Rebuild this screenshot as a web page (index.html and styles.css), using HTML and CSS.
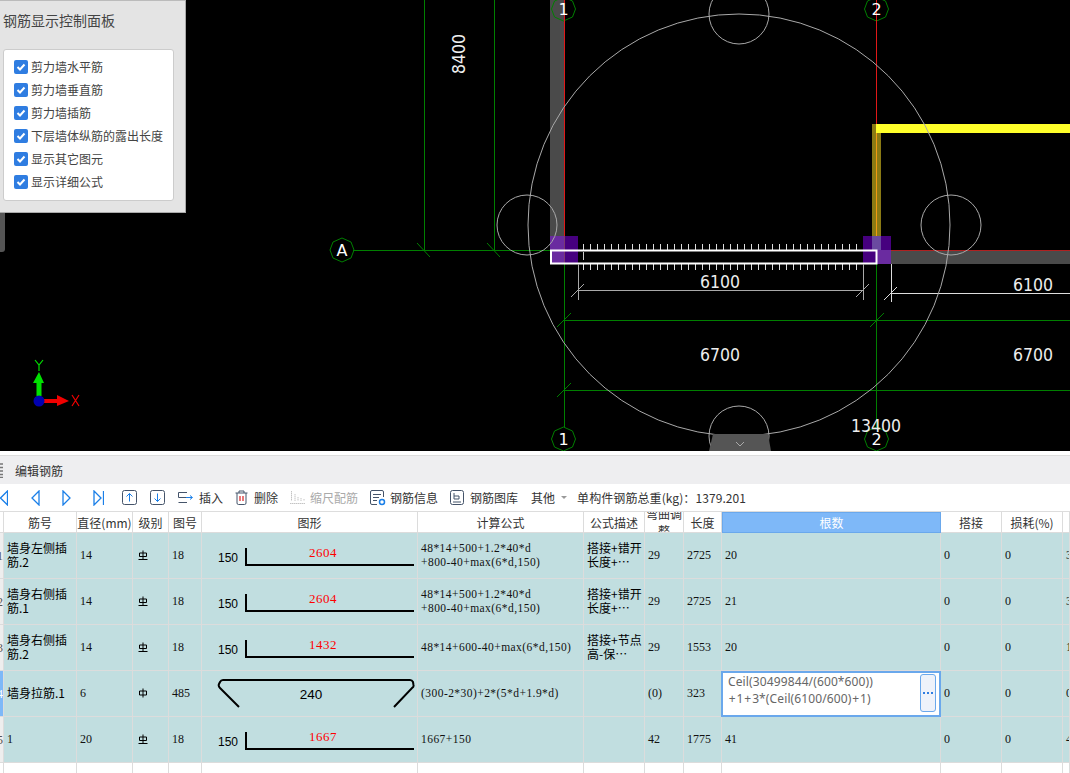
FILE: index.html
```html
<!DOCTYPE html>
<html lang="zh">
<head>
<meta charset="utf-8">
<title>编辑钢筋</title>
<link rel="stylesheet" href="styles.css">
</head>
<body>
<svg class="defs" width="0" height="0">
  <symbol id="g3" viewBox="0 0 10 10"><path d="M5 .5V9.500M1.500 3H8.500V6.500H1.500ZM.5 9.500H9.500" fill="none" stroke="#000" stroke-width="1"/></symbol>
  <symbol id="g1" viewBox="0 0 10 10"><path d="M5 .5V9.500M1.500 3H8.500V7H1.500Z" fill="none" stroke="#000" stroke-width="1"/></symbol>
</svg>
<section class="viewport">
  <svg class="cad" width="1070" height="451" viewBox="0 0 1070 451">
    <rect width="1070" height="451" fill="#000"/>
    <rect x="550" y="0" width="14" height="250" fill="#4a4a4a"/>
    <rect x="891" y="250" width="179" height="14" fill="#4a4a4a"/>
    <rect x="872" y="124" width="9" height="126" fill="#8a7a14"/>
    <rect x="876" y="124" width="194" height="9" fill="#ffff2a"/>
    <rect x="876" y="133" width="1" height="117" fill="#f39a10"/>
    <g stroke="#007f00" fill="none">
      <path d="M424.500 0V250M494.500 0V250M353 250.500H550M564.500 264V427M876.500 264V427M564 320.500H1070M564 390.500H1070"/>
      <path d="M417 243L430 257M487 243L500 257M557 327L571 313M870 327L884 313M557 397L571 383"/>
      <polygon points="354,250 351,258 342,262 333,258 330,250 333,242 342,238 351,242"/>
      <polygon points="575.500,9 572.500,17 563.500,21 554.500,17 551.500,9 554.500,1 563.500,-3 572.500,1"/>
      <polygon points="888.500,9 885.500,17 876.500,21 867.500,17 864.500,9 867.500,1 876.500,-3 885.500,1"/>
      <polygon points="575.500,439 572.500,447 563.500,451 554.500,447 551.500,439 554.500,431 563.500,427 572.500,431"/>
      <polygon points="888.500,439 885.500,447 876.500,451 867.500,447 864.500,439 867.500,431 876.500,427 885.500,431"/>
    </g>
    <path d="M564.500 0V250M876.500 0V124" stroke="#e01818" fill="none"/>
    <path d="M891 250.500H1070" stroke="#b02020"/>
    <rect x="550" y="236" width="28" height="28" fill="#46007f"/>
    <rect x="550" y="236" width="14" height="28" fill="#6a2ba0"/>
    <rect x="863" y="236" width="28" height="28" fill="#46007f"/>
    <rect x="877" y="250" width="14" height="14" fill="#6a2ba0"/>
    <rect x="872" y="236" width="9" height="14" fill="#6a4aa0"/>
    <path d="M564.500 236V264" stroke="#7a3a70"/>
    <g fill="none">
      <path d="M583 247H857M583 267H857" stroke="#ddd" stroke-width="6" stroke-dasharray="1 6"/>
      <path d="M583.500 252V260" stroke="#ccc"/>
      <rect x="551" y="250.500" width="325.500" height="13" stroke="#fff" stroke-width="2"/>
      <path d="M578.500 264V300M863.500 264V300M578 290.500H863M571 297L584 284M856 297L869 284" stroke="#a9a9a9"/>
      <path d="M891.500 264V302M891 293.500H1070M884 300L897 287" stroke="#ddd"/>
      <g stroke="#a9a9a9">
        <circle cx="739" cy="225" r="211"/>
        <circle cx="527" cy="225" r="30"/>
        <circle cx="951" cy="225" r="30"/>
        <circle cx="739" cy="14" r="30"/>
        <circle cx="739" cy="436" r="30"/>
      </g>
    </g>
    <path class="tab" d="M713 434H768L771 451H709Z" fill="#555"/>
    <path d="M736 442L740 446L744 442" stroke="#aaa" fill="none"/>
    <g class="dim">
      <text x="720" y="288">6100</text>
      <text x="1033" y="291">6100</text>
      <text x="720" y="361">6700</text>
      <text x="1033" y="361">6700</text>
      <text x="876" y="432">13400</text>
      <text transform="translate(465 54) rotate(-90)" x="0" y="0">8400</text>
    </g>
    <g class="axis-no">
      <text x="342" y="256">A</text>
      <text x="563.500" y="15" fill="#f0c0c0">1</text>
      <text x="876.500" y="15">2</text>
      <text x="563.500" y="445">1</text>
      <text x="876.500" y="445">2</text>
    </g>
    <path d="M36.500 396V383H33L39 372L44 383H41.500V396Z" fill="#00e000"/>
    <path d="M44 399H57V395L69 401L57 406V403H44Z" fill="#f00000"/>
    <circle cx="39" cy="401" r="5.500" fill="#0000b0"/>
    <path d="M35 360L39 365L43 360M39 365V371" stroke="#00e000" fill="none" stroke-width="1.200"/>
    <path d="M72 395L79 406M79 395L72 406" stroke="#f00000" fill="none" stroke-width="1.200"/>
  </svg>
  <div class="side-tab"></div>
  <aside class="panel">
    <h2 class="panel-title">钢筋显示控制面板</h2>
    <div class="panel-box">
      <label class="opt"><span class="chk"><svg width="14" height="14" viewBox="0 0 14 14"><path d="M3.500 7L6 9.500L10.500 4.500" fill="none" stroke="#fff" stroke-width="2"/></svg></span>剪力墙水平筋</label>
      <label class="opt"><span class="chk"><svg width="14" height="14" viewBox="0 0 14 14"><path d="M3.500 7L6 9.500L10.500 4.500" fill="none" stroke="#fff" stroke-width="2"/></svg></span>剪力墙垂直筋</label>
      <label class="opt"><span class="chk"><svg width="14" height="14" viewBox="0 0 14 14"><path d="M3.500 7L6 9.500L10.500 4.500" fill="none" stroke="#fff" stroke-width="2"/></svg></span>剪力墙插筋</label>
      <label class="opt"><span class="chk"><svg width="14" height="14" viewBox="0 0 14 14"><path d="M3.500 7L6 9.500L10.500 4.500" fill="none" stroke="#fff" stroke-width="2"/></svg></span>下层墙体纵筋的露出长度</label>
      <label class="opt"><span class="chk"><svg width="14" height="14" viewBox="0 0 14 14"><path d="M3.500 7L6 9.500L10.500 4.500" fill="none" stroke="#fff" stroke-width="2"/></svg></span>显示其它图元</label>
      <label class="opt"><span class="chk"><svg width="14" height="14" viewBox="0 0 14 14"><path d="M3.500 7L6 9.500L10.500 4.500" fill="none" stroke="#fff" stroke-width="2"/></svg></span>显示详细公式</label>
    </div>
  </aside>
</section>

<section class="editor-pane">
  <header class="pane-title">
    <svg class="grip" width="3" height="15" viewBox="0 0 3 15"><path d="M0 1H3M0 4.500H3M0 8H3M0 11.500H3M0 14.500H3" stroke="#777" stroke-width="1.500"/></svg>
    <span>编辑钢筋</span>
  </header>
  <div class="toolbar">
    <svg class="nav n0" width="8" height="16" viewBox="0 0 8 16"><path d="M7.500 1L.5 8L7.500 15Z" fill="none" stroke="#1a7fe8" stroke-width="1.300"/></svg>
    <svg class="nav n1" width="9" height="16" viewBox="0 0 9 16"><path d="M8 1L1 8L8 15Z" fill="none" stroke="#1a7fe8" stroke-width="1.300"/></svg>
    <svg class="nav n2" width="9" height="16" viewBox="0 0 9 16"><path d="M1 1L8 8L1 15Z" fill="none" stroke="#1a7fe8" stroke-width="1.300"/></svg>
    <svg class="nav n3" width="11" height="16" viewBox="0 0 11 16"><path d="M1 1L8 8L1 15ZM10.500 1V15" fill="none" stroke="#1a7fe8" stroke-width="1.300"/></svg>
    <svg class="nav n4" width="15" height="15" viewBox="0 0 15 15"><rect x=".5" y=".5" width="14" height="14" rx="2" fill="none" stroke="#45546a"/><path d="M7.500 11.500V3.500M4.500 6.500L7.500 3.500L10.500 6.500" fill="none" stroke="#1a7fe8"/></svg>
    <svg class="nav n5" width="15" height="15" viewBox="0 0 15 15"><rect x=".5" y=".5" width="14" height="14" rx="2" fill="none" stroke="#45546a"/><path d="M7.500 3.500V11.500M4.500 8.500L7.500 11.500L10.500 8.500" fill="none" stroke="#1a7fe8"/></svg>
    <button class="tool t-ins"><svg width="15" height="12" viewBox="0 0 15 12"><path d="M9 .5H.5V5.500H9M.5 10.500H9" fill="none" stroke="#45546a"/><path d="M8 5.500H14M12 3.500L14.500 5.500L12 7.500" fill="none" stroke="#1a7fe8"/></svg>插入</button>
    <button class="tool t-del"><svg width="13" height="15" viewBox="0 0 13 15"><path d="M.5 3H12.500M4 3V1H9V3M2 3V13Q2 14.500 3.500 14.500H9.500Q11 14.500 11 13V3" fill="none" stroke="#45546a"/><path d="M5 6V11M8 6V11" stroke="#d92020" stroke-width="1.200"/></svg>删除</button>
    <button class="tool t-off"><svg width="15" height="15" viewBox="0 0 15 15"><path d="M1.500 1V11M5 4V11M8 7V11M11 8V11M14 9V11M0 13.500H15" fill="none" stroke="#c4c4c4" stroke-dasharray="1.500 .5"/></svg>缩尺配筋</button>
    <button class="tool t-inf"><svg width="16" height="16" viewBox="0 0 16 16"><path d="M7 14.500H2Q.5 14.500 .5 13V2Q.5 .5 2 .5H12Q13.500 .5 13.500 2V7M3 4.500H11M3 7.500H9M3 10.500H7" fill="none" stroke="#45546a"/><circle cx="12" cy="12" r="2.500" fill="none" stroke="#1a7fe8" stroke-width="1.500"/></svg>钢筋信息</button>
    <button class="tool t-lib"><svg width="14" height="15" viewBox="0 0 14 15"><rect x=".5" y=".5" width="13" height="14" rx="2" fill="none" stroke="#45546a"/><path d="M4 3V9H9V6H4M3 12H11" fill="none" stroke="#45546a"/></svg>钢筋图库</button>
    <button class="tool t-more">其他<span class="caret"></span></button>
    <span class="total">单构件钢筋总重(kg)：1379.201</span>
  </div>

  <div class="grid">
    <div class="row head">
      <div class="c"></div><div class="c">筋号</div><div class="c">直径(mm)</div><div class="c">级别</div><div class="c">图号</div><div class="c">图形</div><div class="c">计算公式</div><div class="c">公式描述</div><div class="c wrap">弯曲调整</div><div class="c">长度</div><div class="c on">根数</div><div class="c">搭接</div><div class="c">损耗(%)</div><div class="c"></div>
    </div>

    <div class="row data">
      <div class="c no">1</div><div class="c cn">墙身左侧插<br>筋.2</div><div class="c">14</div><div class="c sym"><svg width="10" height="10"><use href="#g3"/></svg></div><div class="c">18</div>
      <div class="c pic"><svg width="215" height="45" viewBox="0 0 215 45"><text class="s150" x="16" y="29">150</text><path d="M44 15V32H212" fill="none" stroke="#000" stroke-width="2"/><text class="len" x="121" y="24">2604</text></svg></div>
      <div class="c fx">48*14+500+1.2*40*d<br>+800-40+max(6*d,150)</div><div class="c cn">搭接+错开<br>长度+…</div><div class="c">29</div><div class="c">2725</div><div class="c">20</div><div class="c">0</div><div class="c">0</div><div class="c">3</div>
    </div>

    <div class="row data">
      <div class="c no">2</div><div class="c cn">墙身右侧插<br>筋.1</div><div class="c">14</div><div class="c sym"><svg width="10" height="10"><use href="#g3"/></svg></div><div class="c">18</div>
      <div class="c pic"><svg width="215" height="45" viewBox="0 0 215 45"><text class="s150" x="16" y="29">150</text><path d="M44 15V32H212" fill="none" stroke="#000" stroke-width="2"/><text class="len" x="121" y="24">2604</text></svg></div>
      <div class="c fx">48*14+500+1.2*40*d<br>+800-40+max(6*d,150)</div><div class="c cn">搭接+错开<br>长度+…</div><div class="c">29</div><div class="c">2725</div><div class="c">21</div><div class="c">0</div><div class="c">0</div><div class="c">3</div>
    </div>

    <div class="row data">
      <div class="c no">3</div><div class="c cn">墙身右侧插<br>筋.2</div><div class="c">14</div><div class="c sym"><svg width="10" height="10"><use href="#g3"/></svg></div><div class="c">18</div>
      <div class="c pic"><svg width="215" height="45" viewBox="0 0 215 45"><text class="s150" x="16" y="29">150</text><path d="M44 15V32H212" fill="none" stroke="#000" stroke-width="2"/><text class="len" x="121" y="24">1432</text></svg></div>
      <div class="c fx">48*14+600-40+max(6*d,150)</div><div class="c cn">搭接+节点<br>高-保…</div><div class="c">29</div><div class="c">1553</div><div class="c">20</div><div class="c">0</div><div class="c">0</div><div class="c">1</div>
    </div>

    <div class="row data">
      <div class="c no sel">4</div><div class="c cn">墙身拉筋.1</div><div class="c">6</div><div class="c sym"><svg width="10" height="10"><use href="#g1"/></svg></div><div class="c">485</div>
      <div class="c pic"><svg width="215" height="45" viewBox="0 0 215 45"><path d="M37 36L18 17Q16 15 17 13L18 11Q19 9 21 9H208Q210 9 211 11L211.500 14Q212 16 210 17L192 36" fill="none" stroke="#000" stroke-width="2"/><text class="s240" x="109" y="28">240</text></svg></div>
      <div class="c fx">(300-2*30)+2*(5*d+1.9*d)</div><div class="c"></div><div class="c">(0)</div><div class="c">323</div>
      <div class="c edit">
        <div class="edit-text">Ceil(30499844/(600*600))<br><span class="plus">+</span>1<span class="plus">+</span>3*(Ceil(6100/600)<span class="plus">+</span>1)</div>
        <button class="edit-btn"><svg width="10" height="2" viewBox="0 0 10 2"><path d="M0 0H2V2H0ZM4 0H6V2H4ZM8 0H10V2H8Z" fill="#2f7de1"/></svg></button>
      </div>
      <div class="c">0</div><div class="c">0</div><div class="c">0</div>
    </div>

    <div class="row data">
      <div class="c no">5</div><div class="c">1</div><div class="c">20</div><div class="c sym"><svg width="10" height="10"><use href="#g3"/></svg></div><div class="c">18</div>
      <div class="c pic"><svg width="215" height="45" viewBox="0 0 215 45"><text class="s150" x="16" y="29">150</text><path d="M44 15V32H212" fill="none" stroke="#000" stroke-width="2"/><text class="len" x="121" y="24">1667</text></svg></div>
      <div class="c fx">1667+150</div><div class="c"></div><div class="c">42</div><div class="c">1775</div><div class="c">41</div><div class="c">0</div><div class="c">0</div><div class="c">4</div>
    </div>

    <div class="row blank">
      <div class="c"></div><div class="c"></div><div class="c"></div><div class="c"></div><div class="c"></div><div class="c"></div><div class="c"></div><div class="c"></div><div class="c"></div><div class="c"></div><div class="c"></div><div class="c"></div><div class="c"></div><div class="c"></div>
    </div>
  </div>
</section>
</body>
</html>
```
FILE: styles.css
```css
* { box-sizing: border-box; }
html, body { margin: 0; padding: 0; }
body {
  width: 1070px;
  height: 773px;
  overflow: hidden;
  background: #fff;
  font-family: "Noto Sans CJK SC", "Noto Sans", sans-serif;
  font-size: 12px;
  color: #333;
}
.defs { display: block; height: 0; }

/* drawing viewport */
.viewport { position: relative; height: 451px; background: #000; overflow: hidden; }
.cad { display: block; }
.dim text {
  font-family: "DejaVu Sans", sans-serif;
  font-stretch: condensed;
  font-size: 17.5px;
  fill: #eee;
  text-anchor: middle;
}
.axis-no text {
  font-family: "DejaVu Sans", sans-serif;
  font-size: 16px;
  fill: #fff;
  text-anchor: middle;
}
.side-tab {
  position: absolute;
  left: 0;
  top: 200px;
  width: 5px;
  height: 52px;
  background: #555;
  border-bottom-right-radius: 3px;
}
.panel {
  position: absolute;
  left: 0;
  top: 0;
  width: 186px;
  height: 213px;
  background: #e4e4e4;
  border-top: 1px solid #bbb;
  border-right: 1px solid #aaa;
  border-bottom: 1px solid #aaa;
  padding: 0 12px 0 3px;
}
.panel-title {
  margin: 0;
  height: 48px;
  padding-top: 10px;
  font-size: 14px;
  line-height: 18px;
  font-weight: 400;
  color: #444;
}
.panel-box {
  width: 171px;
  height: 152px;
  background: #fff;
  border: 1px solid #ccc;
  border-radius: 3px;
  padding: 5px 0 0 10px;
}
.opt {
  display: flex;
  align-items: center;
  gap: 3px;
  height: 23px;
  font-size: 12px;
  color: #444;
}
.chk {
  display: flex;
  width: 14px;
  height: 14px;
  border-radius: 2px;
  background: #2f7de1;
}

/* editor pane */
.editor-pane { margin-top: 4px; border-top: 1px solid #ddd; }
.pane-title {
  display: flex;
  align-items: center;
  height: 28px;
  background: #eeeef0;
  color: #333;
}
.grip { margin-right: 12px; }
.toolbar {
  display: flex;
  align-items: center;
  height: 28px;
  background: #fff;
  border-bottom: 1px solid #ddd;
  white-space: nowrap;
}
.nav { flex: none; }
.n1 { margin-left: 23px; }
.n2 { margin-left: 22px; }
.n3 { margin-left: 22px; }
.n4 { margin-left: 18px; }
.n5 { margin-left: 13px; }
.tool {
  display: flex;
  align-items: center;
  padding: 0;
  border: 0;
  background: none;
  font: inherit;
  color: #333;
}
.t-ins { margin-left: 13px; gap: 6px; }
.t-del { margin-left: 12px; gap: 6px; }
.t-off { margin-left: 12px; gap: 5px; color: #aaa; }
.t-inf { margin-left: 12px; gap: 4px; }
.t-lib { margin-left: 12px; gap: 6px; }
.t-more { margin-left: 13px; }
.caret {
  width: 0;
  height: 0;
  margin-left: 6px;
  border: 3px solid transparent;
  border-top: 3px solid #999;
  border-bottom: 0;
}
.total { margin-left: 10px; letter-spacing: .08px; font-family: "Noto Sans CJK SC", "Noto Sans", sans-serif; }

/* table */
.row {
  display: grid;
  grid-template-columns: 4px 73px 56px 36px 33px 216px 166px 61px 39px 38px 219px 61px 61px 7px;
}
.c {
  display: flex;
  align-items: center;
  min-width: 0;
  overflow: hidden;
  border-right: 1px solid #dcdcdc;
  border-bottom: 1px solid #dcdcdc;
}
.head { height: 21px; background: #fff; }
.head .c { justify-content: center; font-size: 12px; color: #333; line-height: 17px; }
.head .wrap { text-align: center; }
.head .on { background: #7eb8f8; color: #fff; border: 1px solid #6aa8ec; }

.data { height: 46px; background: #c1dee0; }
.data .c {
  padding: 0 0 2px 3px;
  font-family: "Liberation Serif", serif;
  font-size: 12px;
  line-height: 14px;
  color: #111;
  white-space: nowrap;
}
.data .fx { font-size: 11.500px; letter-spacing: .45px; }
.data .cn { font-family: "Noto Sans CJK SC", sans-serif; font-size: 12px; line-height: 13.500px; color: #000; }
.data .no { padding: 0; justify-content: flex-end; color: #555; background: #eee; }
.data .sel { background: #7eb8f8; color: #fff; }
.data .sym { padding-left: 5px; }
.data .pic { padding: 0; }
.pic svg { display: block; }
.s150, .s240 { font-family: "Liberation Sans", sans-serif; font-size: 12px; fill: #000; }
.s240 { font-size: 13.500px; text-anchor: middle; }
.len { font-family: "Liberation Serif", serif; font-size: 13px; letter-spacing: .5px; fill: #f00; text-anchor: middle; }

.data .edit {
  display: flex;
  align-items: stretch;
  margin-left: -1px;
  padding: 0;
  background: #fff;
  border: 2px solid #6aa8ec;
  overflow: hidden;
}
.edit-text {
  flex: 1;
  padding: 0 5px;
  font-family: "Noto Sans", sans-serif;
  font-size: 12px;
  line-height: 17px;
  letter-spacing: .12px;
  color: #666;
}
.plus { margin: 0 .8px; }
.edit-btn {
  display: flex;
  align-items: center;
  justify-content: center;
  width: 16px;
  margin: 1px 3px 3px 0;
  padding: 0;
  background: #eef2fa;
  border: 1px solid #6aa8ec;
  border-radius: 3px;
}
.blank { height: 11px; background: #fff; }
.blank .c { border-bottom: 0; }
```
